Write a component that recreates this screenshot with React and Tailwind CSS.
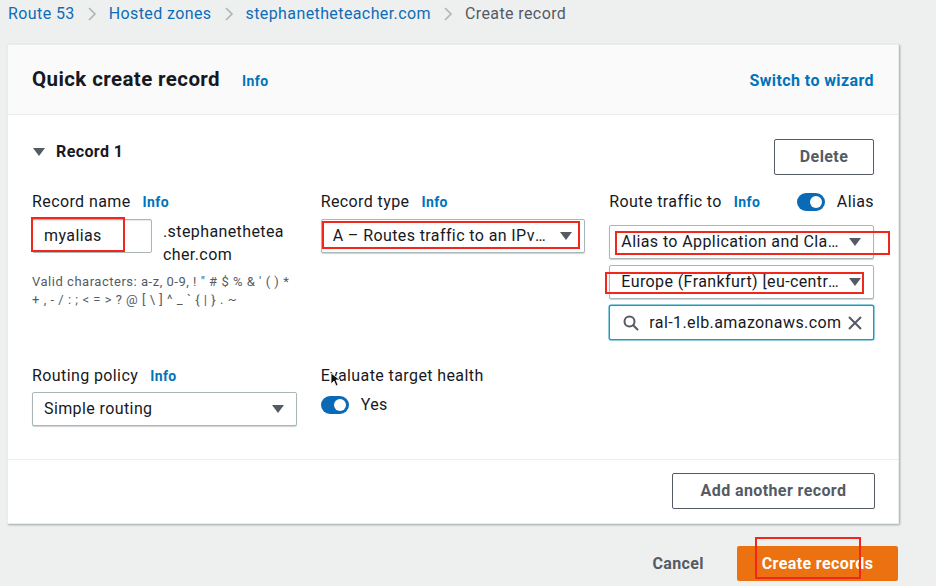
import React from "react";

const font = { fontFamily: "Roboto, 'Open Sans', sans-serif" };

const Caret = () => (
  <svg width="14" height="10" viewBox="0 0 14 10" className="shrink-0">
    <path d="M1 1h12L7 9z" fill="#545b64" />
  </svg>
);

const Info = () => (
  <span className="ml-3 text-[14px] font-bold text-[#0073bb]">Info</span>
);

const Toggle = () => (
  <span className="relative inline-block h-[18px] w-[28px] rounded-full bg-[#0a6ab5]">
    <span className="absolute right-[3px] top-[3px] h-[12px] w-[12px] rounded-full bg-white"></span>
  </span>
);

const Select = ({ text, red }) => (
  <div className="relative flex h-[34px] items-center justify-between rounded-[2px] border border-[#aab7b8] bg-white pl-[11px] pr-[11px] shadow-[0_1px_1px_rgba(0,28,36,0.2)]">
    <span className="truncate text-[16px] text-[#16191f]">{text}</span>
    <span className="ml-2">
      <Caret />
    </span>
    {red}
  </div>
);

const RedBox = ({ className }) => (
  <span className={`pointer-events-none absolute border-2 border-[#f2261b] ${className}`}></span>
);

const Chevron = () => (
  <span className="mx-[12px]">
    <svg width="10" height="16" viewBox="0 0 10 16">
      <path d="M2 2l6 6-6 6" fill="none" stroke="#aab7b8" strokeWidth="1.6" />
    </svg>
  </span>
);

const App = () => {
  return (
    <div className="relative h-[586px] w-[936px] overflow-hidden bg-[#eef0f0] tracking-[0.025em] text-[#16191f]" style={font}>
      <nav className="flex h-[27px] items-center pl-[8px] text-[16px]">
        <span className="text-[#0f6cb6]">Route 53</span>
        <Chevron />
        <span className="text-[#0f6cb6]">Hosted zones</span>
        <Chevron />
        <span className="text-[#0f6cb6]">stephanetheteacher.com</span>
        <Chevron />
        <span className="text-[#545b64]">Create record</span>
      </nav>

      <div className="ml-[7px] mt-[17px] w-[892px] border border-[#eaeded] bg-white shadow-[1px_1px_2px_rgba(0,28,36,0.35)]">
        <div className="flex h-[70px] items-center justify-between border-b border-[#eaeded] bg-[#fafafa] px-[24px]">
          <div className="flex items-baseline">
            <h2 className="text-[20.5px] font-bold">Quick create record</h2>
            <span className="ml-[22px] text-[14px] font-bold text-[#0073bb]">Info</span>
          </div>
          <span className="mt-[2px] text-[16px] font-bold text-[#0073bb]">Switch to wizard</span>
        </div>

        <div className="px-[24px] pb-[33px] pt-[24px]">
          <div className="flex items-start justify-between">
            <div className="mt-[2px] flex h-[22px] items-center gap-[10px] text-[16px] font-bold">
              <Caret />
              Record 1
            </div>
            <button className="h-[36px] w-[100px] rounded-[2px] border border-[#545b64] text-[16px] font-bold text-[#545b64]">
              Delete
            </button>
          </div>

          <div className="mt-[16px] grid grid-cols-3 gap-x-[24px] gap-y-[25px]">
            <div>
              <div className="flex h-[22px] items-center text-[16px]">
                Record name
                <Info />
              </div>
              <div className="mt-[6px] flex">
                <div className="relative flex h-[34px] w-[120px] items-center rounded-[2px] border border-[#aab7b8] bg-white pl-[11px] text-[16px] shadow-[inset_0_1px_1px_rgba(0,28,36,0.1)]">
                  myalias
                  <RedBox className="-left-[2px] -top-[3px] h-[35px] w-[94px]" />
                </div>
                <div className="ml-[11px] w-[124px] break-all pt-[1px] text-[16px] leading-[23px]">
                  .stephanetheteacher.com
                </div>
              </div>
              <p className="mt-[7px] whitespace-nowrap text-[13px] tracking-[0.04em] leading-[18px] text-[#545b64]">
                Valid characters: a-z, 0-9, ! " # $ % &amp; ' ( ) *
                <br />+ , - / : ; &lt; = &gt; ? @ [ \ ] ^ _ ` {"{"} | {"}"} . ~
              </p>
            </div>

            <div>
              <div className="flex h-[22px] items-center text-[16px]">
                Record type
                <Info />
              </div>
              <div className="mt-[6px]">
                <Select
                  text="A – Routes traffic to an IPv4 address and some AWS resources"
                  red={<RedBox className="left-[0px] top-[1px] h-[28px] w-[258px]" />}
                />
              </div>
            </div>

            <div>
              <div className="flex h-[22px] items-center justify-between text-[16px]">
                <div className="flex items-center">
                  Route traffic to
                  <Info />
                </div>
                <div className="flex items-center gap-[12px]">
                  <Toggle />
                  Alias
                </div>
              </div>
              <div className="mt-[12px] flex flex-col gap-[6px]">
                <Select
                  text="Alias to Application and Classic Load Balancer"
                  red={<RedBox className="left-[5px] top-[5px] h-[24px] w-[275px]" />}
                />
                <Select
                  text="Europe (Frankfurt) [eu-central-1]"
                  red={<RedBox className="-left-[5px] top-[6px] h-[22px] w-[259px]" />}
                />
                <div className="flex h-[35px] items-center rounded-[2px] border border-[#1a9bbf] bg-white pl-[13px] pr-[10px] shadow-[0_0_0_0.5px_#1a9bbf]">
                  <svg width="16" height="16" viewBox="0 0 16 16" className="shrink-0">
                    <circle cx="6.5" cy="6.5" r="5" fill="none" stroke="#545b64" strokeWidth="2" />
                    <path d="M10.2 10.2l4.3 4.3" stroke="#545b64" strokeWidth="2" strokeLinecap="round" />
                  </svg>
                  <span className="ml-[10px] flex-1 truncate text-[16px]">ral-1.elb.amazonaws.com</span>
                  <svg width="16" height="16" viewBox="0 0 16 16" className="shrink-0">
                    <path d="M2 2l12 12M14 2L2 14" stroke="#545b64" strokeWidth="2" />
                  </svg>
                </div>
              </div>
            </div>

            <div>
              <div className="flex h-[22px] items-center text-[16px]">
                Routing policy
                <Info />
              </div>
              <div className="mt-[5px]">
                <Select text="Simple routing" />
              </div>
            </div>

            <div className="relative">
              <div className="flex h-[22px] items-center text-[16px]">Evaluate target health</div>
              <div className="mt-[6px] flex items-center gap-[12px] text-[16px]">
                <Toggle />
                Yes
              </div>
              <svg width="10" height="15" viewBox="0 0 10 15" className="absolute left-[9px] top-[7px]">
                <path d="M1 1v11l3-3 2 5 2-1-2-5h4z" fill="#111" stroke="#fff" strokeWidth="0.8" />
              </svg>
            </div>
            <div></div>
          </div>
        </div>

        <div className="flex justify-end border-t border-[#eaeded] px-[23px] pb-[14px] pt-[13px]">
          <button className="h-[36px] w-[203px] rounded-[2px] border border-[#545b64] text-[16px] font-bold text-[#545b64]">
            Add another record
          </button>
        </div>
      </div>

      <div className="mt-[22px] flex items-center justify-end pr-[38px]">
        <span className="mr-[33px] text-[16px] font-bold text-[#545b64]">Cancel</span>
        <div className="relative">
          <button className="h-[35px] w-[161px] rounded-[2px] bg-[#ec7211] text-[16px] font-bold text-white">
            Create records
          </button>
          <RedBox className="left-[18px] -top-[9px] h-[42px] w-[106px]" />
        </div>
      </div>
    </div>
  );
};

export default App;
